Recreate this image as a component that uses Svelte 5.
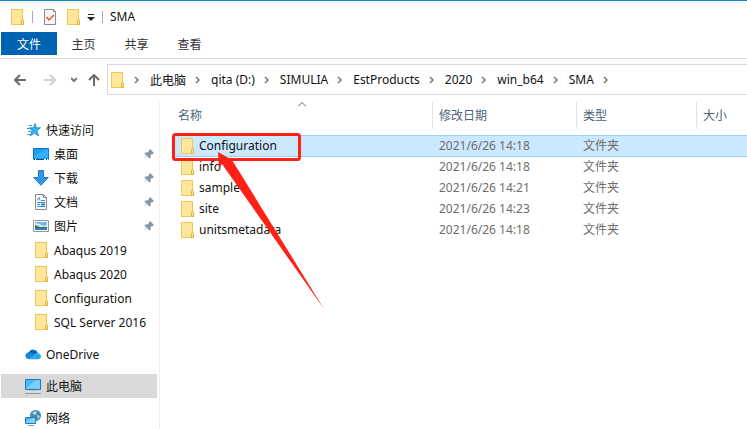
<script>
  const tabs = ['主页', '共享', '查看']
  const crumbs = ['此电脑', 'qita (D:)', 'SIMULIA', 'EstProducts', '2020', 'win_b64', 'SMA']
  const quick = [
    { name: '桌面', icon: 'desktop', pinned: true },
    { name: '下载', icon: 'download', pinned: true },
    { name: '文档', icon: 'document', pinned: true },
    { name: '图片', icon: 'picture', pinned: true },
    { name: 'Abaqus 2019', icon: 'folder' },
    { name: 'Abaqus 2020', icon: 'folder' },
    { name: 'Configuration', icon: 'folder' },
    { name: 'SQL Server 2016', icon: 'folder' }
  ]
  const places = [
    { name: 'OneDrive', icon: 'cloud' },
    { name: '此电脑', icon: 'pc' },
    { name: '网络', icon: 'network' }
  ]
  const files = [
    { name: 'Configuration', date: '2021/6/26 14:18' },
    { name: 'info', date: '2021/6/26 14:18' },
    { name: 'sample', date: '2021/6/26 14:21' },
    { name: 'site', date: '2021/6/26 14:23' },
    { name: 'unitsmetadata', date: '2021/6/26 14:18' }
  ]
  let selected = $state('Configuration')
  let place = $state('此电脑')
</script>

{#snippet icon(kind)}
  <svg class="icon" viewBox="0 0 16 16" aria-hidden="true">
    {#if kind === 'folder'}
      <path d="M2.5.5h11v10l1 1v4h-12z" fill="#ffe69b" stroke="#ecc751" />
      <path d="M12.5 15.5v-4l1-1.5 1 1.5v4z" fill="#ffe69b" stroke="#e0b431" />
    {:else if kind === 'star'}
      <path d="M10 1.500l1.300 4.300h4.200l-3.500 2.700 1.500 5.500-4-3-4.300 3 1.800-5.200-2.500-3h4z" fill="#35b1f5" stroke="#1683cf" stroke-width=".8" />
      <path d="M4 3.500h3M2 6.500h3M3 9.500h3M2 12.500h3" stroke="#4499d4" />
    {:else if kind === 'desktop'}
      <path d="M.5 2.500h15v11H.5z" fill="#16a0fa" stroke="#0877c3" />
      <path d="M1 10L14 3h1v9H1z" fill="#35aefc" />
      <path d="M1 13.500h14" stroke="#075486" />
      <path d="M2 13.500h1M11 13.500h2M14 13.500h1" stroke="#fff" />
    {:else if kind === 'download'}
      <path d="M5.500.5h5v7h4.800L8 15.300.7 7.500h4.800z" fill="#3595e9" stroke="#2479c7" />
    {:else if kind === 'document'}
      <path d="M2.500.5h8l3 3v12h-11z" fill="#fff" stroke="#8a8a8a" />
      <path d="M10.500.5v3h3" fill="none" stroke="#8a8a8a" />
      <path d="M4 6.500l2-3 1 3M8 6.500h4M4 8.500h8M4 10.500h3M4 12.500h8" fill="none" stroke="#3f91cc" />
      <path d="M8 9.500h4v2H8z" fill="#287ebd" />
    {:else if kind === 'picture'}
      <path d="M.5 2.500h15v11H.5z" fill="#fff" stroke="#8f989f" />
      <path d="M2 4h12v8H2z" fill="#78b9ec" />
      <path d="M2 5l4 1 5 2 3-1v2H2z" fill="#d7edf4" />
      <path d="M2 7l5 2h7v1H2z" fill="#35725a" />
      <path d="M2 10h12v2H2z" fill="#377eb8" />
    {:else if kind === 'cloud'}
      <path d="M3 11a4 4 0 0 1 1-5 5 5 0 0 1 9 1z" fill="#0864bd" />
      <path d="M3.500 13a3.300 3.300 0 0 1-.5-6.500l4 .5 6 5z" fill="#1487d8" />
      <path d="M4 12.500l6-4.500c3-2 6 0 6 2.500a2.600 2.600 0 0 1-3 2.700H3.500z" fill="#2aa8ed" />
    {:else if kind === 'pc'}
      <path d="M.5 1.500h15v10H.5z" fill="#4ab8fc" stroke="#2876ac" />
      <path d="M1 10L11 2h4v9H1z" fill="#79cdfd" />
      <path d="M5 12.500h6" stroke="#b4c4d0" />
      <path d="M0 15.500h16" stroke="#7e99ad" />
    {:else if kind === 'network'}
      <circle cx="10.500" cy="5.500" r="5.500" fill="#4b8bad" />
      <path d="M7 3l3-2 2 2-2 2zM12 5l3 1-2 3z" fill="#b7dde7" />
      <path d="M.5 7.500h10v6H.5z" fill="#4db9fb" stroke="#247bb5" />
      <path d="M1 12l7-4h2v5H1z" fill="#80d3ff" />
      <path d="M3 15.500h6" stroke="#7f9bad" />
    {/if}
  </svg>
{/snippet}

{#snippet chevron()}
  <svg class="chevron" viewBox="0 0 6 8" aria-hidden="true"><path d="M1 1l3 3-3 3" /></svg>
{/snippet}

<div class="window">
  <header class="titlebar">
    {@render icon('folder')}
    <span class="divider"></span>
    <div class="tools">
      <button aria-label="属性">
        <svg class="icon" viewBox="0 0 16 16">
          <path d="M1.500.5h9l2 2v13h-11z" fill="#f5f6f9" stroke="#858b96" />
          <path d="M10.500.5v2h2" fill="none" stroke="#858b96" />
          <path d="M3.500 8l2.500 3 5-5" fill="none" stroke="#e8591c" stroke-width="1.500" />
        </svg>
      </button>
      <button aria-label="新建文件夹">{@render icon('folder')}</button>
      <button class="more" aria-label="自定义快速访问工具栏">
        <svg viewBox="0 0 8 8"><path d="M1 1.500h6" stroke="#222" /><path d="M0 4h8L4 8z" fill="#222" /></svg>
      </button>
    </div>
    <span class="divider"></span>
    <h1>SMA</h1>
  </header>

  <nav class="ribbon">
    <button class="file">文件</button>
    {#each tabs as tab}
      <button>{tab}</button>
    {/each}
  </nav>

  <div class="navbar">
    <div class="arrows">
      <button aria-label="后退"><svg viewBox="0 0 12 12"><path d="M12 6H1M6 1L1 6l5 5" /></svg></button>
      <button class="off" aria-label="前进"><svg viewBox="0 0 12 12"><path d="M0 6h11M6 1l5 5-5 5" /></svg></button>
      <button class="recent" aria-label="最近浏览的位置"><svg viewBox="0 0 6 12"><path d="M0 4l3 3 3-3" /></svg></button>
      <button aria-label="上移"><svg viewBox="0 0 12 12"><path d="M6 12V1M1 6l5-5 5 5" /></svg></button>
    </div>
    <div class="address">
      {@render icon('folder')}
      {@render chevron()}
      {#each crumbs as crumb}
        <button>{crumb}</button>
        {@render chevron()}
      {/each}
    </div>
  </div>

  <div class="body">
    <aside>
      <button class="item">{@render icon('star')}<span>快速访问</span></button>
      {#each quick as q}
        <button class="item sub">
          {@render icon(q.icon)}
          <span>{q.name}</span>
          {#if q.pinned}
            <svg class="pin" viewBox="0 0 10 10" aria-hidden="true">
              <path d="M6 0l4 4-1 1H8L6.500 6.500V9l-1 .5L3 7 0 10l2.500-3.500L.5 4.500l.5-1h2.500L5 2V1z" />
            </svg>
          {/if}
        </button>
      {/each}
      {#each places as p}
        <button class="item place" class:current={place === p.name} onclick={() => (place = p.name)}>
          {@render icon(p.icon)}
          <span>{p.name}</span>
        </button>
      {/each}
    </aside>

    <main>
      <table>
        <thead>
          <tr>
            <th class="name">
              名称
              <svg class="sort" viewBox="0 0 8 5" aria-hidden="true"><path d="M0 4.500l4-4 4 4" /></svg>
            </th>
            <th class="date">修改日期</th>
            <th class="type">类型</th>
            <th>大小</th>
          </tr>
        </thead>
        <tbody>
          {#each files as f}
            <tr class:selected={selected === f.name} onclick={() => (selected = f.name)}>
              <td class="name"><div>{@render icon('folder')}{f.name}</div></td>
              <td>{f.date}</td>
              <td>文件夹</td>
              <td></td>
            </tr>
          {/each}
        </tbody>
      </table>
      <!-- red callout over the first row -->
      <svg class="callout" viewBox="0 0 156 180" aria-hidden="true">
        <rect x="1.500" y="1.500" width="126" height="25" rx="2" />
        <path d="M46 19l14 8 92 149L50 31l-3 4z" />
      </svg>
    </main>
  </div>
</div>

<style>
  :global(body) {
    background: #fff;
  }
  .window {
    display: flex;
    flex-direction: column;
    min-height: 100vh;
    box-sizing: border-box;
    overflow: hidden;
    border-top: 1px solid #0a8ad0;
    font-family: 'Noto Sans', 'Noto Sans CJK SC', sans-serif;
    font-size: 12px;
    color: #111;
  }
  button {
    padding: 0;
    border: 0;
    background: none;
    font: inherit;
    color: inherit;
  }
  svg {
    display: block;
    flex: none;
  }
  .icon {
    width: 16px;
    height: 16px;
  }

  .titlebar {
    display: flex;
    align-items: center;
    height: 31px;
    padding-left: 9px;
  }
  .divider {
    width: 1px;
    height: 12px;
    margin: 0 7px;
    background: #aaa;
  }
  .tools {
    display: flex;
    align-items: center;
    gap: 6px;
    padding-left: 3px;
  }
  .more svg {
    width: 8px;
    height: 8px;
  }
  h1 {
    margin: 0;
    font-size: 12px;
    font-weight: 400;
  }

  .ribbon {
    display: flex;
    height: 26px;
    padding-left: 1px;
    border-bottom: 1px solid #dadbdc;
  }
  .ribbon button {
    width: 53px;
    height: 23px;
    color: #333;
  }
  .ribbon .file {
    width: 56px;
    background: #0063b1;
    color: #fff;
  }

  .navbar {
    display: flex;
    padding-top: 5px;
  }
  .arrows {
    display: flex;
    align-items: center;
    gap: 18px;
    width: 93px;
    padding-left: 14px;
  }
  .arrows svg {
    width: 12px;
    height: 12px;
    fill: none;
    stroke: #6a6a6a;
    stroke-width: 2;
  }
  .arrows .off svg {
    stroke: #d0d0d0;
  }
  .arrows .recent svg {
    width: 6px;
    stroke: #777;
  }
  .arrows .recent {
    margin: 0 -7px 0 -3px;
  }
  .address {
    display: flex;
    flex: 1;
    align-items: center;
    gap: 9px;
    height: 29px;
    padding-left: 1px;
    border: 1px solid #d9d9d9;
    border-right: 0;
  }
  .chevron {
    width: 6px;
    height: 8px;
    margin-right: 1px;
    fill: none;
    stroke: #777;
    stroke-width: 1.5;
  }

  .body {
    display: flex;
    flex: 1;
    padding-top: 7px;
  }
  aside {
    width: 158px;
    flex: none;
    padding: 16px 0 0 1px;
    border-right: 1px solid #eee;
  }
  .item {
    display: flex;
    align-items: center;
    gap: 5px;
    width: 156px;
    height: 24px;
    padding: 0 3px 0 24px;
    text-align: left;
  }
  .sub {
    padding-left: 32px;
  }
  .place {
    margin-top: 8px;
  }
  .current {
    background: #d9d9d9;
  }
  .pin {
    width: 10px;
    height: 10px;
    margin-left: auto;
    fill: #8995a0;
  }

  main {
    position: relative;
    flex: 1;
    padding-left: 12px;
  }
  table {
    width: 100%;
    table-layout: fixed;
    border-collapse: separate;
    border-spacing: 0;
  }
  th {
    height: 25px;
    padding: 0 6px 2px;
    border-left: 1px solid #e2e2e2;
    text-align: left;
    font-weight: 400;
    color: #4c607a;
  }
  th.name {
    position: relative;
    width: 248px;
    border-left: 0;
  }
  th.date {
    width: 131px;
  }
  th.type {
    width: 107px;
  }
  .sort {
    position: absolute;
    top: 0;
    left: 50%;
    width: 8px;
    height: 5px;
    margin-left: -4px;
    fill: none;
    stroke: #666;
  }
  tbody::before {
    content: '';
    display: block;
    height: 6px;
  }
  td {
    height: 21px;
    padding: 0 7px;
    line-height: 20px;
    color: #6d6d6d;
  }
  td.name {
    color: #111;
  }
  td.name div {
    display: flex;
    align-items: center;
    gap: 4px;
  }
  .selected td {
    background: #cce8ff;
    box-shadow: inset 0 1px #99d1ff, 0 1px #99d1ff;
  }
  .callout {
    position: absolute;
    top: 31px;
    left: 12px;
    width: 156px;
    height: 180px;
    pointer-events: none;
  }
  .callout rect {
    fill: none;
    stroke: #ff2116;
    stroke-width: 3;
  }
  .callout path {
    fill: #ff2116;
  }
</style>
